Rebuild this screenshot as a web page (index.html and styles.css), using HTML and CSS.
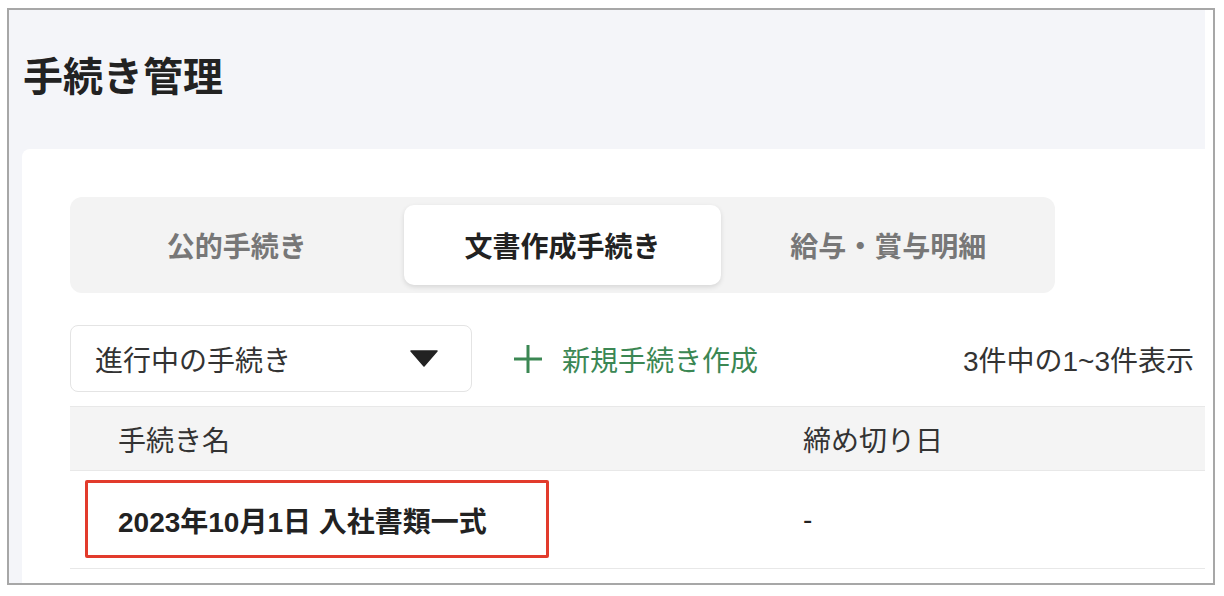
FILE: index.html
```html
<!DOCTYPE html>
<html lang="ja">
<head>
  <meta charset="UTF-8" />
  <meta name="viewport" content="width=device-width, initial-scale=1.0"/>
  <title>手続き管理</title>
  <link rel="stylesheet" href="styles.css">
</head>
<body>
  <div class="frame">
    <div class="page">
      <h1 class="page-title">手続き管理</h1>

      <section class="card">
        <div class="tabs">
          <button class="tab">公的手続き</button>
          <button class="tab is-active">文書作成手続き</button>
          <button class="tab">給与・賞与明細</button>
        </div>

        <div class="toolbar">
          <div class="select">
            <span>進行中の手続き</span>
            <svg class="caret" width="28" height="17" viewBox="0 0 28 17">
              <path d="M1 1 H27 L14 16 Z" fill="#222" stroke="#222" stroke-width="1.5" stroke-linejoin="round"/>
            </svg>
          </div>
          <button class="new-btn">
            <svg width="30" height="30" viewBox="0 0 30 30">
              <path d="M15 1 V29 M1 15 H29" stroke="currentColor" stroke-width="3"/>
            </svg>
            新規手続き作成
          </button>
          <span class="count">3件中の1~3件表示</span>
        </div>

        <table class="proc-table">
          <thead>
            <tr>
              <th class="col-name">手続き名</th>
              <th>締め切り日</th>
            </tr>
          </thead>
          <tbody>
            <tr>
              <td class="col-name">
                <strong>2023年10月1日 入社書類一式</strong>
                <span class="mark"></span>
              </td>
              <td>-</td>
            </tr>
          </tbody>
        </table>
      </section>
    </div>
    <div class="gutter"></div>
  </div>
</body>
</html>
```

FILE: styles.css
```css
body {
  margin: 0;
  padding: 0;
  background-color: #fff;
  font-family: "Liberation Sans", "Noto Sans CJK JP", sans-serif;
  color: #333;
}

.frame {
  margin: 8px 0 0 7px;
  width: 1208px;
  height: 577px;
  box-sizing: border-box;
  border: 2px solid #a7a7a7;
  display: flex;
  overflow: hidden;
  background: #fff;
}

.page {
  width: 1196px;
  background-color: #f4f5f9;
  padding-left: 13px;
  box-sizing: border-box;
  display: flex;
  flex-direction: column;
}

.gutter {
  flex: 1;
  background: #fff;
}

.page-title {
  margin: 37px 0 42px 1px;
  font-size: 40px;
  line-height: 60px;
  font-weight: bold;
  color: #222;
}

.card {
  flex: 1;
  background: #fff;
  border-radius: 8px 0 0 0;
  padding: 48px 0 0 48px;
}

/* tabs */
.tabs {
  width: 985px;
  box-sizing: border-box;
  padding: 8px;
  display: flex;
  gap: 8px;
  background: #f3f3f3;
  border-radius: 12px;
}

.tab {
  flex: 1;
  height: 80px;
  border: none;
  border-radius: 10px;
  background: transparent;
  font-family: inherit;
  font-size: 28px;
  font-weight: bold;
  color: #777;
  cursor: pointer;
}

.tab.is-active {
  background: #fff;
  color: #222;
  box-shadow: 0 2px 5px rgba(0, 0, 0, 0.12);
}

/* toolbar */
.toolbar {
  margin-top: 32px;
  height: 67px;
  display: flex;
  align-items: center;
}

.select {
  width: 402px;
  height: 67px;
  box-sizing: border-box;
  border: 1px solid #e4e4e4;
  border-radius: 8px;
  padding: 0 33px 0 24px;
  display: flex;
  align-items: center;
  justify-content: space-between;
  font-size: 28px;
  color: #333;
}

.new-btn {
  margin-left: 41px;
  display: flex;
  align-items: center;
  gap: 19px;
  border: none;
  background: none;
  padding: 0;
  font-family: inherit;
  font-size: 28px;
  color: #3b8753;
  cursor: pointer;
}

.count {
  margin-left: auto;
  padding-right: 11px;
  font-size: 28px;
  color: #333;
}

/* table */
.proc-table {
  margin-top: 14px;
  width: 100%;
  border-collapse: separate;
  border-spacing: 0;
  font-size: 28px;
}

.proc-table th {
  height: 63px;
  padding: 0 0 0 48px;
  text-align: left;
  font-weight: normal;
  color: #333;
  background: #f4f4f4;
  border-top: 1px solid #e8e8e8;
  border-bottom: 1px solid #e8e8e8;
}

.proc-table td {
  height: 97px;
  padding: 0 0 0 48px;
  border-bottom: 1px solid #e8e8e8;
  color: #222;
}

.proc-table .col-name {
  width: 637px;
  position: relative;
}

.proc-table strong {
  font-weight: bold;
  color: #222;
}

.mark {
  position: absolute;
  left: 15px;
  top: 9px;
  width: 464px;
  height: 78px;
  box-sizing: border-box;
  border: 3px solid #e23b2c;
  border-radius: 2px;
}
```
